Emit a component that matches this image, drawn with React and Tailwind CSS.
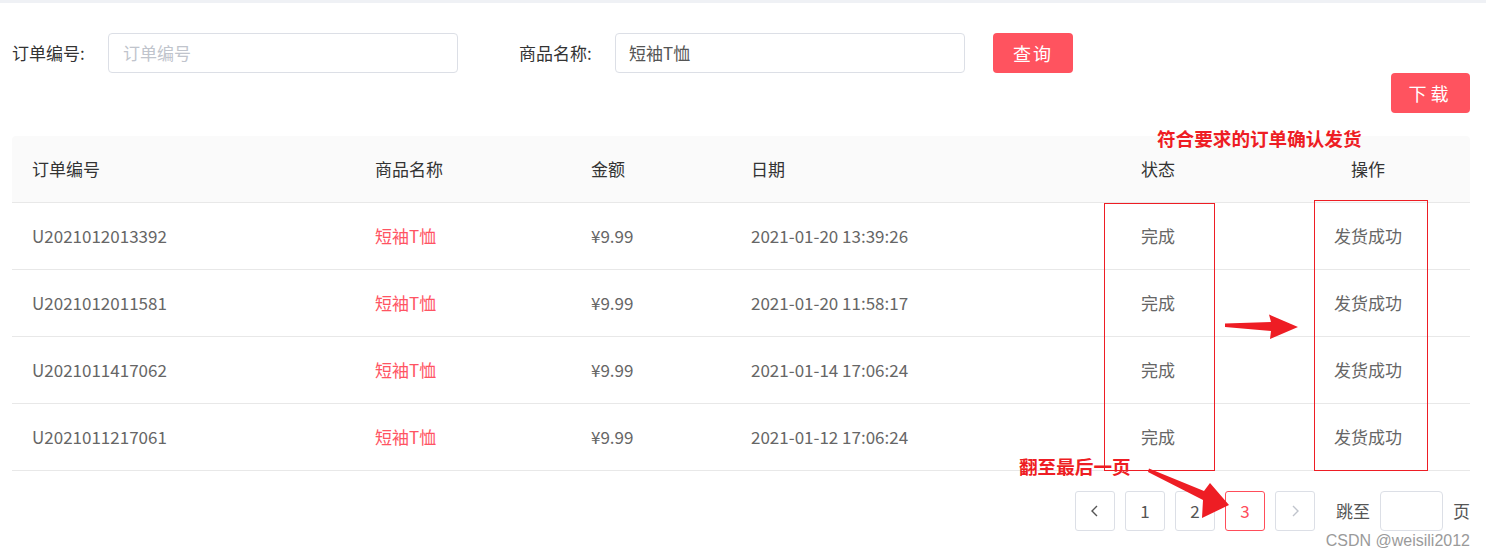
import React from 'react';

const FONT = { fontFamily: '"Microsoft YaHei", "Noto Sans CJK SC", "Noto Sans", sans-serif' };

const ROWS = [
  { id: 'U2021012013392', name: '短袖T恤', amount: '¥9.99', date: '2021-01-20 13:39:26' },
  { id: 'U2021012011581', name: '短袖T恤', amount: '¥9.99', date: '2021-01-20 11:58:17' },
  { id: 'U2021011417062', name: '短袖T恤', amount: '¥9.99', date: '2021-01-14 17:06:24' },
  { id: 'U2021011217061', name: '短袖T恤', amount: '¥9.99', date: '2021-01-12 17:06:24' },
];

const COLS = 'grid grid-cols-[343px_216px_160px_319px_216px_204px]';

const PageBtn = ({ children, active, muted }) => (
  <div className={`w-10 h-10 rounded-[3px] border flex items-center justify-center text-[17px] ${active ? 'border-[#ff4d5a] text-[#ff4d5a]' : 'border-[#dcdfe6] ' + (muted ? 'text-[#c0c4cc]' : 'text-[#555]')}`}>
    {children}
  </div>
);

export default function App() {
  return (
    <div className="relative w-[1486px] h-[558px] bg-white overflow-hidden" style={FONT}>
      <div className="h-[3px] bg-[#eff1f5]" />
      <div className="pl-3 pr-4">
        {/* search bar */}
        <div className="flex items-center mt-[30px] h-10">
          <span className="text-[17px] text-[#333] w-[96px]">订单编号:</span>
          <div className="w-[350px] h-10 border border-[#dcdfe6] rounded-[4px] flex items-center px-[14px] text-[17px] text-[#c0c4cc]">订单编号</div>
          <span className="ml-[61px] text-[17px] text-[#333] w-[96px]">商品名称:</span>
          <div className="w-[350px] h-10 border border-[#dcdfe6] rounded-[4px] flex items-center px-[13px] text-[17px] text-[#555]">短袖T恤</div>
          <button className="ml-[28px] w-20 h-10 rounded-[4px] bg-[#ff535f] text-white text-[18px] tracking-[2px]">查询</button>
        </div>
        <div className="flex justify-end">
          <button className="w-[79px] h-10 rounded-[4px] bg-[#ff535f] text-white text-[18px] tracking-[4px]">下载</button>
        </div>

        {/* table */}
        <div className="mt-[23px] w-[1458px]">
          <div className={`${COLS} h-[67px] bg-[#fafafa] border-b border-[#e8e8e8] items-center text-[17px] text-[#333] rounded-t-[4px]`}>
            <div className="pl-5">订单编号</div>
            <div className="pl-5">商品名称</div>
            <div className="pl-5">金额</div>
            <div className="pl-5">日期</div>
            <div className="text-center">状态</div>
            <div className="text-center">操作</div>
          </div>
          {ROWS.map((r) => (
            <div key={r.id} className={`${COLS} h-[67px] border-b border-[#e8e8e8] items-center text-[17px] text-[#666]`}>
              <div className="pl-5">{r.id}</div>
              <div className="pl-5 text-[#ff5463]">{r.name}</div>
              <div className="pl-5">{r.amount}</div>
              <div className="pl-5">{r.date}</div>
              <div className="text-center">完成</div>
              <div className="text-center">发货成功</div>
            </div>
          ))}
        </div>

        {/* pagination */}
        <div className="flex justify-end items-center gap-[10px] mt-5">
          <PageBtn>
            <svg width="14" height="14" viewBox="0 0 14 14" fill="none" stroke="#555" strokeWidth="1.4"><path d="M9 2 L4 7 L9 12" /></svg>
          </PageBtn>
          <PageBtn>1</PageBtn>
          <PageBtn>2</PageBtn>
          <PageBtn active>3</PageBtn>
          <PageBtn muted>
            <svg width="14" height="14" viewBox="0 0 14 14" fill="none" stroke="#c0c4cc" strokeWidth="1.4"><path d="M5 2 L10 7 L5 12" /></svg>
          </PageBtn>
          <span className="ml-[11px] text-[17px] text-[#555]">跳至</span>
          <div className="w-[63px] h-10 border border-[#dcdfe6] rounded-[4px]" />
          <span className="text-[17px] text-[#555]">页</span>
        </div>
      </div>

      {/* annotations */}
      <div className="absolute left-[1104px] top-[203px] w-[111px] h-[268px] border border-[#ee1d24] pointer-events-none" />
      <div className="absolute left-[1314px] top-[200px] w-[114px] h-[271px] border border-[#ee1d24] pointer-events-none" />
      <div className="absolute left-[1157px] top-[126px] text-[18.6px] font-bold text-[#ee1d24] leading-6">符合要求的订单确认发货</div>
      <div className="absolute left-[1019px] top-[454px] text-[18.6px] font-bold text-[#ee1d24] leading-6">翻至最后一页</div>
      <svg className="absolute left-0 top-0 pointer-events-none" width="1486" height="558">
        <polygon points="1225,323.5 1271,322 1269,314.5 1298,327 1270,339 1271,331 1225,327" fill="#ee1d24" />
        <polygon points="1149,468.5 1204,491 1210,483 1229,505 1202,518 1203,500 1148,472" fill="#ee1d24" />
      </svg>
      <div className="absolute right-[16px] top-[531px] text-[16px] text-[#9a9a9a] leading-5" style={{ fontFamily: '"Liberation Sans", Arial, sans-serif' }}>CSDN @weisili2012</div>
    </div>
  );
}
